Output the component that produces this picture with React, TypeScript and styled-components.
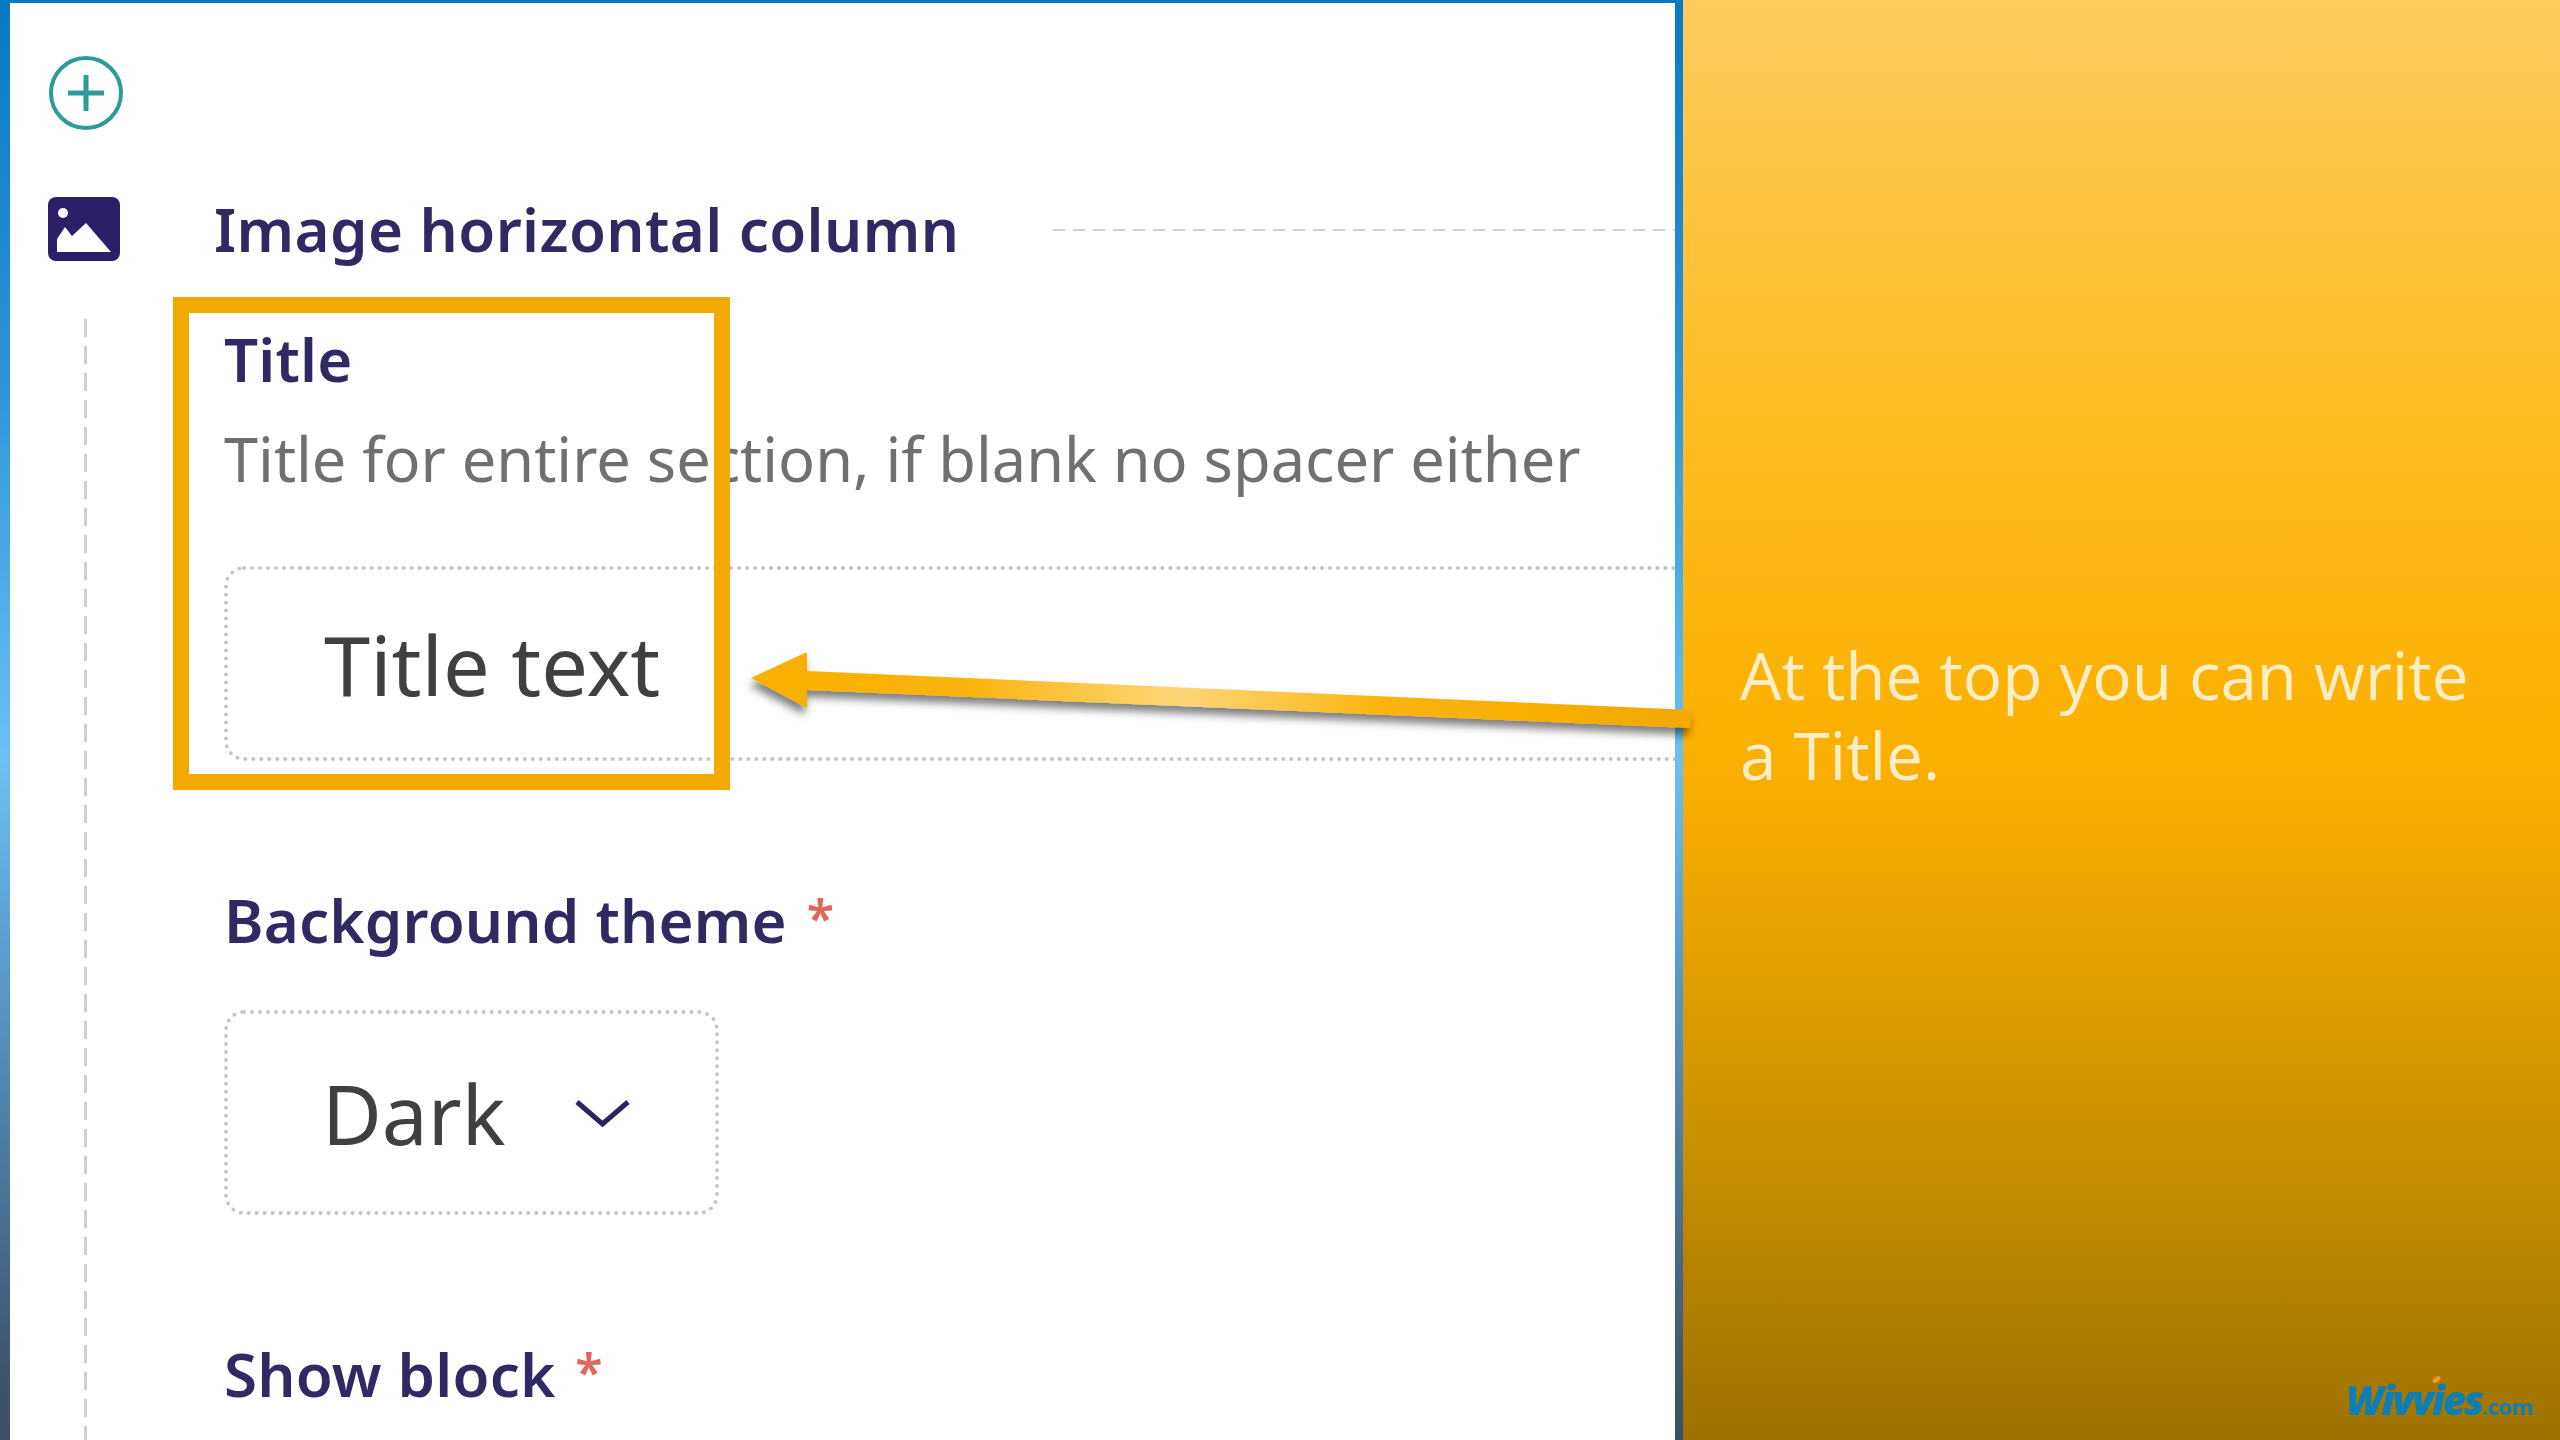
import React from 'react';
import styled, { createGlobalStyle } from 'styled-components';

const GlobalStyle = createGlobalStyle`
  html, body {
    margin: 0;
    padding: 0;
    background: #fff;
  }
`;

const Page = styled.div`
  position: relative;
  display: grid;
  grid-template-columns: 1683px 877px;
  width: 2560px;
  height: 1440px;
  overflow: hidden;
  font-family: "Noto Sans", "Open Sans", sans-serif;
  filter: blur(0.7px);
`;

const EditorFrame = styled.section`
  padding: 3px 8px 0 10px;
  background: linear-gradient(180deg, #0a78c6 0%, #2f93da 25%, #6cc0f2 50%, #5b9fcf 62%, #40566f 90%, #36465c 100%);
  min-width: 0;
`;

const Editor = styled.div`
  height: 100%;
  box-sizing: border-box;
  padding: 52px 0 0 38px;
  background: #fff;
  overflow: hidden;
`;

const AddButton = styled.svg`
  display: block;
  width: 76px;
  height: 76px;
`;

const BlockHeader = styled.div`
  display: flex;
  align-items: center;
  height: 64px;
  margin-top: 66px;
`;

const BlockIcon = styled.svg`
  flex: none;
  width: 72px;
  height: 64px;
`;

const BlockTitle = styled.h2`
  flex: none;
  margin: 0 94px 0 94px;
  font-size: 60px;
  line-height: 64px;
  font-weight: 600;
  letter-spacing: 0.4px;
  color: #2f2a63;
`;

const HeaderRule = styled.div`
  flex: 1;
  height: 2px;
  margin-top: 2px;
  background: repeating-linear-gradient(90deg, #cfcfd4 0 12px, transparent 12px 20px);
`;

const BlockBody = styled.div`
  display: flex;
  margin-top: 58px;
  height: 1200px;
`;

const Rail = styled.div`
  flex: none;
  width: 3px;
  margin-left: 36px;
  background: repeating-linear-gradient(180deg, #cfcfd4 0 18px, transparent 18px 27px);
`;

const Fields = styled.div`
  flex: 1;
  min-width: 0;
  padding: 8px 0 0 137px;
`;

const Label = styled.div<{ $top?: number }>`
  margin-top: ${(p) => p.$top ?? 0}px;
  font-size: 60px;
  line-height: 64px;
  font-weight: 600;
  letter-spacing: 0.2px;
  color: #2f2a63;
`;

const Required = styled.span`
  position: relative;
  top: -7px;
  margin-left: 4px;
  font-size: 50px;
  color: #e0675c;
`;

const Hint = styled.div`
  margin-top: 35px;
  font-size: 61.3px;
  line-height: 64px;
  font-weight: 400;
  color: #707070;
  white-space: nowrap;
`;

const TextBox = styled.div`
  box-sizing: border-box;
  display: flex;
  align-items: center;
  width: 1600px;
  height: 195px;
  margin-top: 76px;
  padding-left: 96px;
  border: 4px dotted #c4c4ca;
  border-radius: 20px;
  font-size: 83px;
  color: #404040;
`;

const SelectBox = styled(TextBox)`
  width: 495px;
  height: 205px;
  margin-top: 54px;
  padding-left: 94px;
  font-size: 82px;
`;

const Chevron = styled.svg`
  width: 57px;
  height: 28px;
  margin-left: 68px;
`;

const CalloutPane = styled.aside`
  display: flex;
  flex-direction: column;
  box-sizing: border-box;
  height: 1440px;
  padding: 0 27px 12px 57px;
  background: linear-gradient(180deg, #fdca5c 0%, #fdbc20 30%, #fcb000 52%, #d99a00 72%, #9e7200 100%);
`;

const CalloutText = styled.p`
  margin: 635px 0 0;
  font-family: "Open Sans", "Noto Sans", sans-serif;
  font-size: 65.6px;
  line-height: 80px;
  font-weight: 400;
  color: #fdeec8;
`;

const Logo = styled.div`
  position: relative;
  align-self: flex-end;
  margin-top: auto;
  font-family: "Open Sans", sans-serif;
  font-style: italic;
  font-weight: 800;
  font-size: 40px;
  line-height: 44px;
  letter-spacing: -2px;
  color: #0a7fb5;

  &::after {
    content: '';
    position: absolute;
    left: 86px;
    top: -1px;
    width: 9px;
    height: 5px;
    border-radius: 50%;
    background: #f29a1f;
    transform: rotate(-35deg);
  }
`;

const LogoSuffix = styled.span`
  font-size: 22px;
  font-weight: 700;
  font-style: normal;
  letter-spacing: -0.5px;
`;

const Highlight = styled.div`
  position: absolute;
  left: 173px;
  top: 297px;
  box-sizing: border-box;
  width: 557px;
  height: 493px;
  border: 16px solid #f2a900;
`;

const ArrowOverlay = styled.svg`
  position: absolute;
  left: 740px;
  top: 640px;
  width: 970px;
  height: 110px;
  overflow: visible;
`;

const App: React.FC = () => {
  return (
    <>
      <GlobalStyle />
      <Page>
        <EditorFrame>
          <Editor>
            <AddButton viewBox="0 0 76 76">
              <circle cx="38" cy="38" r="35" fill="none" stroke="#2a9d96" strokeWidth="4" />
              <path d="M38 20v36M20 38h36" stroke="#2a9d96" strokeWidth="5" />
            </AddButton>
            <BlockHeader>
              <BlockIcon viewBox="0 0 72 64">
                <rect x="0" y="0" width="72" height="64" rx="8" fill="#2c1f68" />
                <circle cx="15" cy="16" r="5" fill="#fff" />
                <path d="M9 55V42l8-12 7 9 14-13 25 29z" fill="#fff" />
              </BlockIcon>
              <BlockTitle>Image horizontal column</BlockTitle>
              <HeaderRule />
            </BlockHeader>
            <BlockBody>
              <Rail />
              <Fields>
                <Label>Title</Label>
                <Hint>Title for entire section, if blank no spacer either</Hint>
                <TextBox>Title text</TextBox>
                <Label $top={127}>
                  Background theme <Required>*</Required>
                </Label>
                <SelectBox>
                  Dark
                  <Chevron viewBox="0 0 57 28">
                    <path d="M3 3l25.500 22L54 3" fill="none" stroke="#2c2460" strokeWidth="5" />
                  </Chevron>
                </SelectBox>
                <Label $top={127}>
                  Show block <Required>*</Required>
                </Label>
              </Fields>
            </BlockBody>
          </Editor>
        </EditorFrame>
        <CalloutPane>
          <CalloutText>
            At the top you can write
            <br />a Title.
          </CalloutText>
          <Logo>
            Wivvies<LogoSuffix>.com</LogoSuffix>
          </Logo>
        </CalloutPane>
        <Highlight />
        <ArrowOverlay viewBox="0 0 970 110">
          <defs>
            <linearGradient id="arrowFill" x1="0" x2="1" y1="0" y2="0">
              <stop offset="0" stopColor="#f9ae00" />
              <stop offset="0.22" stopColor="#fbb30a" />
              <stop offset="0.46" stopColor="#fdd678" />
              <stop offset="0.68" stopColor="#fbb30a" />
              <stop offset="1" stopColor="#f2a900" />
            </linearGradient>
            <filter id="arrowShadow" x="-5%" y="-30%" width="110%" height="180%">
              <feDropShadow dx="-2" dy="7" stdDeviation="4" floodColor="#000" floodOpacity="0.5" />
            </filter>
          </defs>
          <path
            d="M11 38L67 12V31L952 70L950 88L67 50V68Z"
            fill="url(#arrowFill)"
            filter="url(#arrowShadow)"
          />
        </ArrowOverlay>
      </Page>
    </>
  );
};

export default App;
